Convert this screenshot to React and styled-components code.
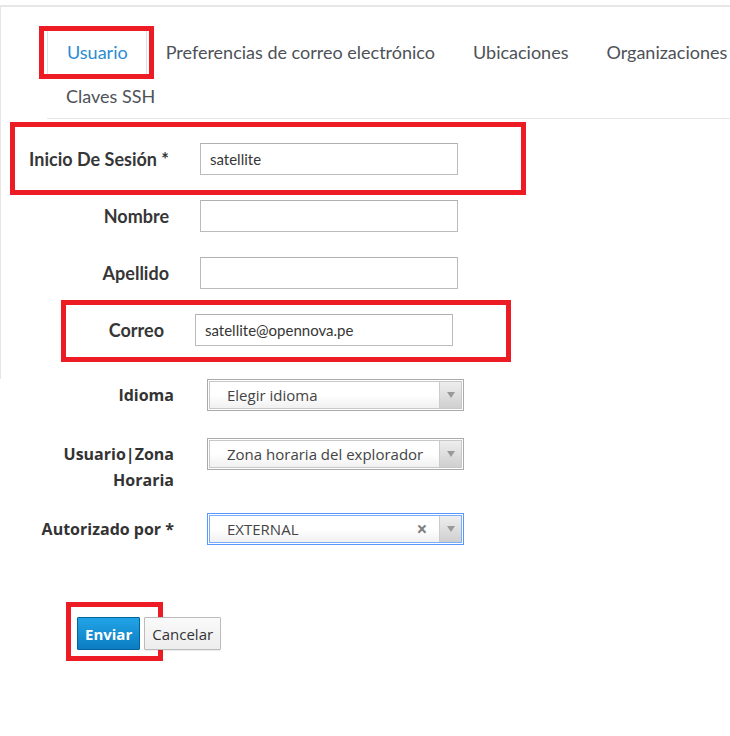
import React from 'react';
import styled, { createGlobalStyle } from 'styled-components';

const GlobalStyle = createGlobalStyle`
  html, body {
    margin: 0;
    padding: 0;
    background: #fff;
    overflow: hidden;
  }
  body {
    font-family: "Lato", "Liberation Sans", sans-serif;
  }
`;

const Page = styled.div`
  width: 730px;
  height: 736px;
  padding-top: 5px;
  box-sizing: border-box;
  overflow: hidden;
`;

const Panel = styled.div`
  width: 760px;
  height: 374px;
  box-sizing: border-box;
  border-top: 2px solid #e6e6e6;
  border-left: 1px solid #e6e6e6;
  padding-top: 23px;
`;

const Tabs = styled.ul`
  list-style: none;
  margin: 0 0 0 46px;
  padding: 0;
  width: 720px;
  display: flex;
  flex-wrap: wrap;
  border-bottom: 1px solid #e6e6e6;
`;

const Tab = styled.li`
  position: relative;
  height: 43px;
  line-height: 43px;
  padding: ${p => (p.$active ? '0 18px 0 19px' : '0 18px')};
  font-size: 18px;
  color: ${p => (p.$active ? '#2b8bd2' : '#4d5258')};
  border: 1px solid ${p => (p.$active ? '#e1e1e1' : 'transparent')};
  border-bottom: none;
  white-space: nowrap;
`;

const Highlight = styled.span`
  position: absolute;
  top: ${p => p.$top}px;
  left: ${p => p.$left}px;
  width: ${p => p.$width}px;
  height: ${p => p.$height}px;
  box-sizing: border-box;
  border: 5px solid #ed1c24;
  pointer-events: none;
`;

const Form = styled.div`
  display: flex;
  flex-direction: column;
  gap: 25px;
  padding-top: 24px;
`;

const Row = styled.div`
  position: relative;
  display: grid;
  grid-template-columns: 168px 258px;
  column-gap: 31px;
  align-items: center;
  margin-left: ${p => p.$shift || 0}px;
`;

const Label = styled.label`
  text-align: right;
  font-weight: 700;
  font-size: 18px;
  color: #363636;
`;

const TextInput = styled.div`
  height: 32px;
  box-sizing: border-box;
  border: 1px solid #bbbbbb;
  border-top-color: #b0b0b0;
  background: #fff;
  padding: 0 9px;
  line-height: 30px;
  font-size: 15px;
  color: #363636;
`;

const Lower = styled.div`
  font-family: "Open Sans", "Liberation Sans", sans-serif;
  display: flex;
  flex-direction: column;
`;

const SelectRow = styled.div`
  display: grid;
  grid-template-columns: 174px 257px;
  column-gap: 33px;
  align-items: start;
  margin-top: ${p => p.$space || 0}px;
`;

const SelectLabel = styled.label`
  text-align: right;
  font-weight: 700;
  font-size: 16px;
  line-height: 26px;
  padding-top: 3px;
  color: #333;
`;

const Select = styled.div`
  height: 32px;
  box-sizing: border-box;
  display: flex;
  align-items: stretch;
  border: 1px solid ${p => (p.$focus ? '#5897fb' : '#aaaaaa')};
  box-shadow: inset 0 0 0 1px #fff, inset 0 0 0 2px ${p => (p.$focus ? '#7aaefc' : '#c8c8c8')};
  background: linear-gradient(#ffffff 0%, #ffffff 50%, #eeeeee 100%);
`;

const SelectText = styled.span`
  flex: 1;
  padding-left: 19px;
  line-height: 30px;
  font-size: 15px;
  color: #444;
  white-space: nowrap;
  overflow: hidden;
`;

const Clear = styled.span`
  width: 18px;
  line-height: 30px;
  font-size: 19px;
  font-weight: 700;
  color: #808080;
  text-align: center;
  margin-right: 8px;
`;

const Arrow = styled.span`
  width: 21px;
  margin: 2px 2px 2px 0;
  border-left: 1px solid #cccccc;
  background: linear-gradient(#eeeeee, #cfcfcf);
  display: flex;
  align-items: center;
  justify-content: center;
  &::after {
    content: '';
    border-left: 4px solid transparent;
    border-right: 4px solid transparent;
    border-top: 6px solid #999;
  }
`;

const Actions = styled.div`
  display: flex;
  gap: 4px;
  margin: 72px 0 0 77px;
`;

const Button = styled.button`
  position: relative;
  height: 33px;
  padding: 0 7px;
  font-family: "Open Sans", "Liberation Sans", sans-serif;
  font-size: 15px;
  font-weight: ${p => (p.$primary ? 700 : 400)};
  color: ${p => (p.$primary ? '#fff' : '#333')};
  border: 1px solid ${p => (p.$primary ? '#00659c' : '#bbbbbb')};
  border-radius: 1px;
  background: ${p =>
    p.$primary
      ? 'linear-gradient(#22a4e6, #0b7cc2)'
      : 'linear-gradient(#fafafa, #ededed)'};
  box-shadow: ${p => (p.$primary ? 'none' : '0 1px 1px rgba(0,0,0,0.08)')};
`;

const tabs = ['Usuario', 'Preferencias de correo electrónico', 'Ubicaciones', 'Organizaciones', 'Claves SSH'];

export default function App() {
  return (
    <Page>
      <GlobalStyle />
      <Panel>
        <Tabs>
          {tabs.map((t, i) => (
            <Tab key={t} $active={i === 0}>
              {t}
              {i === 0 && <Highlight $top={-5} $left={-9} $width={115} $height={53} />}
            </Tab>
          ))}
        </Tabs>
        <Form>
          <Row>
            <Label>Inicio De Sesión *</Label>
            <TextInput>satellite</TextInput>
            <Highlight $top={-21} $left={9} $width={516} $height={73} />
          </Row>
          <Row>
            <Label>Nombre</Label>
            <TextInput />
          </Row>
          <Row>
            <Label>Apellido</Label>
            <TextInput />
          </Row>
          <Row $shift={-5}>
            <Label>Correo</Label>
            <TextInput>satellite@opennova.pe</TextInput>
            <Highlight $top={-14} $left={65} $width={450} $height={62} />
          </Row>
        </Form>
      </Panel>
      <Lower>
        <SelectRow>
          <SelectLabel>Idioma</SelectLabel>
          <Select>
            <SelectText>Elegir idioma</SelectText>
            <Arrow />
          </Select>
        </SelectRow>
        <SelectRow $space={27}>
          <SelectLabel>Usuario|Zona Horaria</SelectLabel>
          <Select>
            <SelectText>Zona horaria del explorador</SelectText>
            <Arrow />
          </Select>
        </SelectRow>
        <SelectRow $space={20}>
          <SelectLabel>Autorizado por *</SelectLabel>
          <Select $focus>
            <SelectText>EXTERNAL</SelectText>
            <Clear>×</Clear>
            <Arrow />
          </Select>
        </SelectRow>
      </Lower>
      <Actions>
        <Button $primary>
          Enviar
          <Highlight $top={-16} $left={-12} $width={97} $height={59} />
        </Button>
        <Button>Cancelar</Button>
      </Actions>
    </Page>
  );
}
